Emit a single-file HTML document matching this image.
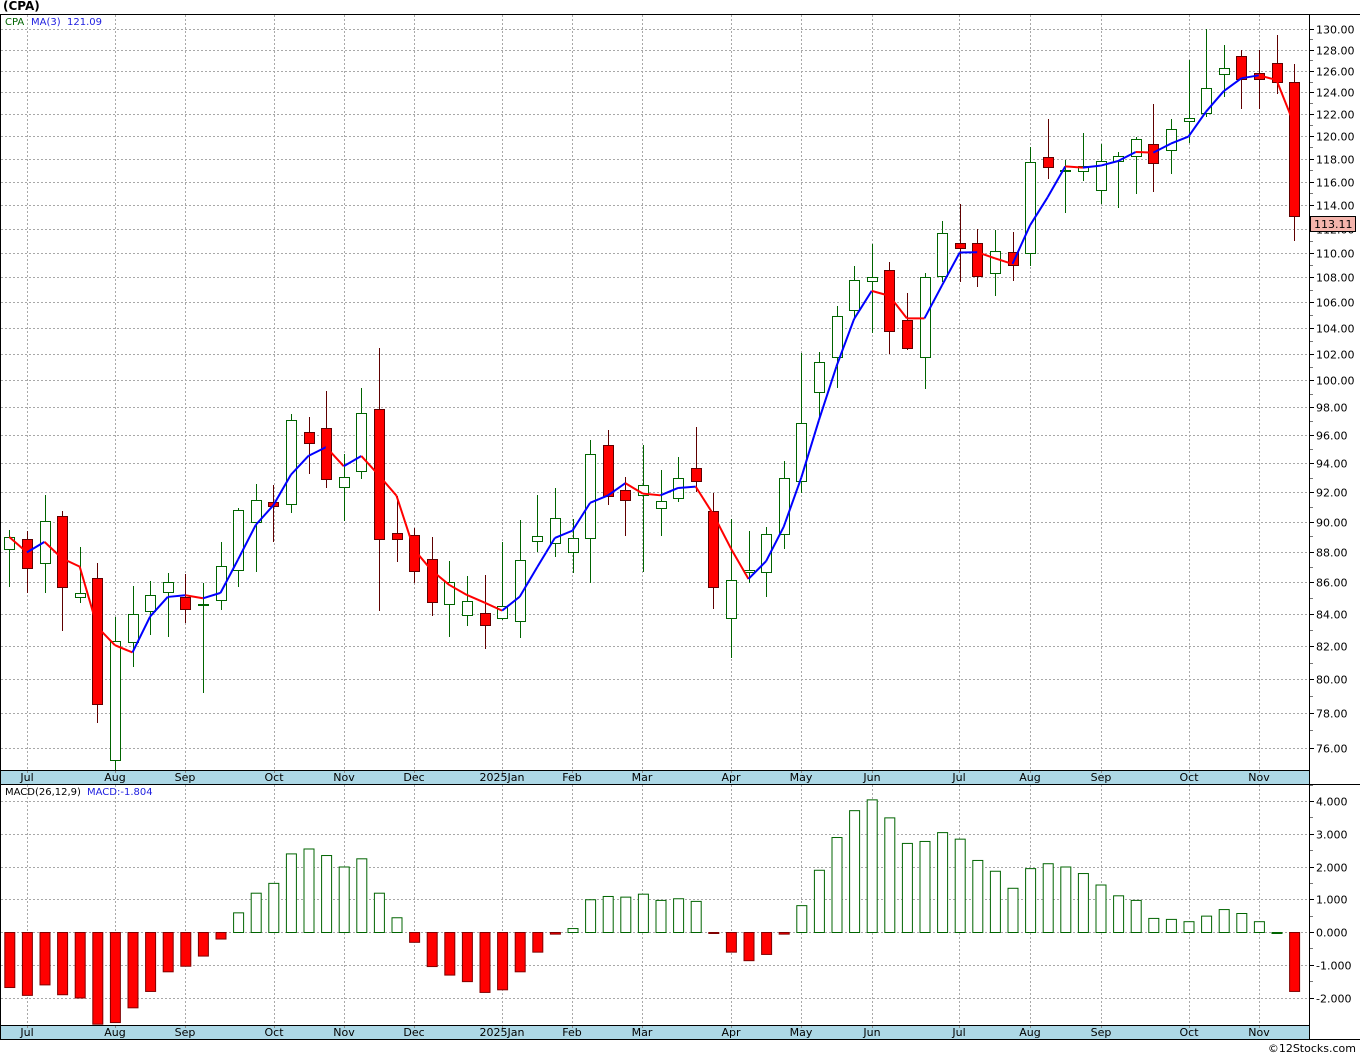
<!DOCTYPE html>
<html><head><meta charset="utf-8"><style>
html,body{margin:0;padding:0;background:#fff;width:1360px;height:1056px;overflow:hidden}
svg{display:block}
text{font-family:"DejaVu Sans","Liberation Sans",sans-serif;font-size:11px}
</style></head><body>
<svg id="s" width="1360" height="1056" xmlns="http://www.w3.org/2000/svg">
<text x="3" y="10" style="font-weight:bold;font-size:12px">(CPA)</text>
<g id="g"></g>
<text x="5" y="25" fill="#006400" style="font-size:10px">CPA</text>
<text x="31" y="25" fill="#2020e0" style="font-size:10px">MA(3)</text>
<text x="67" y="25" fill="#2020e0" style="font-size:10px">121.09</text>
<text x="5" y="795" fill="#000" style="font-size:10px">MACD(26,12,9)</text>
<text x="87" y="795" fill="#2020e0" style="font-size:10px">MACD:-1.804</text>
<text x="1356" y="1052" text-anchor="end" style="font-size:11px">©12Stocks.com</text>
</svg>
<script>
var C=[
[530,537,549,587,'g'],[531,539,568,593,'r'],[495,521,563,593,'g'],[511,516,587,631,'r'],[547,593,597,603,'g'],
[563,578,704,723,'r'],[617,641,760,770,'g'],[586,614,642,667,'g'],[581,595,611,635,'g'],[573,582,592,637,'g'],
[574,597,609,623,'r'],[583,604,605,693,'g'],[542,566,600,610,'g'],[508,510,570,587,'g'],[484,500,522,572,'g'],
[485,502,506,542,'r'],[414,420,504,513,'g'],[417,432,443,474,'r'],[391,428,479,488,'r'],[454,477,487,521,'g'],
[388,413,471,479,'g'],[348,409,539,611,'r'],[496,533,539,562,'r'],[528,535,571,583,'r'],[537,559,602,616,'r'],
[561,582,604,637,'g'],[576,601,615,626,'g'],[575,613,625,649,'r'],[542,606,618,620,'g'],[520,560,621,638,'g'],
[495,536,541,552,'g'],[488,518,543,557,'g'],[519,538,552,573,'g'],[440,454,538,583,'g'],[430,445,496,505,'r'],
[477,490,500,536,'r'],[445,485,495,572,'g'],[470,501,508,536,'g'],[457,478,498,502,'g'],[427,468,481,492,'r'],
[493,511,587,609,'r'],[519,580,618,658,'g'],[531,570,572,583,'g'],[527,534,572,597,'g'],[461,478,534,549,'g'],
[353,423,481,493,'g'],[352,362,392,420,'g'],[306,316,357,388,'g'],[266,280,310,320,'g'],[244,277,281,333,'g'],
[262,270,331,354,'r'],[293,320,348,350,'r'],[273,277,357,389,'g'],[221,233,276,282,'g'],[204,243,248,282,'r'],
[229,243,276,287,'r'],[230,251,273,296,'g'],[232,252,265,281,'r'],[147,162,253,266,'g'],[119,157,167,179,'r'],
[160,170,171,213,'g'],[133,166,171,181,'g'],[144,161,190,204,'g'],[152,156,161,208,'g'],[137,139,156,194,'g'],
[104,144,163,192,'r'],[119,129,150,174,'g'],[60,118,121,143,'g'],[29,88,113,117,'g'],[45,68,74,97,'g'],
[50,56,79,109,'r'],[50,73,79,109,'r'],[35,63,82,94,'r'],[64,82,216,241,'r']];
var M=[-1.68,-1.92,-1.6,-1.9,-2.0,-2.8,-2.75,-2.3,-1.8,-1.2,-1.03,-0.72,-0.2,0.6,1.2,1.5,2.4,2.55,2.35,2.0,2.25,1.2,0.45,-0.3,-1.04,-1.3,-1.5,-1.83,-1.75,-1.2,-0.6,-0.05,0.12,1.0,1.1,1.08,1.17,0.98,1.03,0.95,-0.03,-0.6,-0.86,-0.67,-0.05,0.82,1.9,2.9,3.72,4.05,3.5,2.72,2.78,3.05,2.85,2.2,1.87,1.35,1.95,2.1,2.0,1.8,1.45,1.12,0.98,0.43,0.4,0.33,0.5,0.7,0.58,0.33,0.0,-1.8];
var K=1339.4,L130=Math.log(130);
function py(p){return 29+(L130-Math.log(p))*K}
function pp(y){return Math.exp(L130-(y-29)/K)}
function X(i){return 9.3+17.6*i}
var h='';
var months=[['Jul',27],['Aug',115],['Sep',185],['Oct',274],['Nov',344],['Dec',414],['2025Jan',502],['Feb',572],['Mar',642],['Apr',731],['May',801],['Jun',872],['Jul',959],['Aug',1030],['Sep',1101],['Oct',1189],['Nov',1259]];
var dash='stroke="#a8a8a8" stroke-width="1" stroke-dasharray="2,2"';
// main panel grid
for(var p=76;p<=130;p+=2){var y=Math.round(py(p))+.5;h+='<line x1="1" x2="1309" y1="'+y+'" y2="'+y+'" '+dash+'/>';
h+='<line x1="1309" x2="1314" y1="'+y+'" y2="'+y+'" stroke="#000"/>';
h+='<text x="1316" y="'+(y+4)+'">'+p.toFixed(2)+'</text>';
var y2=Math.round(py(p+1))+.5;if(p<130)h+='<line x1="1309" x2="1313" y1="'+y2+'" y2="'+y2+'" stroke="#777"/>';}
for(var v=-2;v<=4;v++){var y=Math.round(932-v*32.75)+.5;h+='<line x1="1" x2="1309" y1="'+y+'" y2="'+y+'" '+dash+'/>';
h+='<line x1="1309" x2="1314" y1="'+y+'" y2="'+y+'" stroke="#000"/>';
h+='<text x="1316" y="'+(y+4)+'">'+(v<0?'-':'')+Math.abs(v).toFixed(3)+'</text>';
var y2=Math.round(932-(v+.5)*32.75)+.5;h+='<line x1="1309" x2="1313" y1="'+y2+'" y2="'+y2+'" stroke="#777"/>';}
months.forEach(function(m){var x=m[1]+.5;
h+='<line x1="'+x+'" x2="'+x+'" y1="15" y2="770" '+dash+'/>';
h+='<line x1="'+x+'" x2="'+x+'" y1="785" y2="1025" '+dash+'/>';});
// axis strips
h+='<rect x="0" y="770" width="1309" height="14" fill="#add8e6"/>';
h+='<rect x="0" y="1025" width="1309" height="14" fill="#add8e6"/>';
months.forEach(function(m){var x=m[1];
h+='<line x1="'+(x+.5)+'" x2="'+(x+.5)+'" y1="770" y2="773" stroke="#888"/>';
h+='<line x1="'+(x+.5)+'" x2="'+(x+.5)+'" y1="1025" y2="1028" stroke="#888"/>';
h+='<text x="'+x+'" y="781" text-anchor="middle">'+m[0]+'</text>';
h+='<text x="'+x+'" y="1036" text-anchor="middle">'+m[0]+'</text>';});
// borders
h+='<line x1="0" x2="1360" y1="14.5" y2="14.5" stroke="#000"/>';
h+='<line x1="0" x2="1309" y1="770.5" y2="770.5" stroke="#000"/>';
h+='<line x1="0" x2="1360" y1="784.5" y2="784.5" stroke="#000"/>';
h+='<line x1="0" x2="1309" y1="1025.5" y2="1025.5" stroke="#000"/>';
h+='<line x1="0" x2="1360" y1="1039.5" y2="1039.5" stroke="#000"/>';
h+='<line x1="1309.5" x2="1309.5" y1="14" y2="1040" stroke="#000"/>';
h+='<line x1="0.5" x2="0.5" y1="14" y2="1040" stroke="#000"/>';
// macd bars
M.forEach(function(v,i){var x=X(i)-5,y0=932;var y1=932-v*32.75;if(y1>1024)y1=1024;
var t=Math.min(y0,y1),hh=Math.max(Math.abs(y1-y0),1);
if(v<0)h+='<rect x="'+(x+.5)+'" y="'+(t+.5)+'" width="10" height="'+hh+'" fill="#f00" stroke="#800000"/>';
else h+='<rect x="'+(x+.5)+'" y="'+(t+.5)+'" width="10" height="'+hh+'" fill="#fff" stroke="#006400"/>';});
// candles
C.forEach(function(c,i){var x=Math.round(X(i)),red=c[4]=='r';var col=red?'#600000':'#006400';
h+='<line x1="'+(x+.5)+'" x2="'+(x+.5)+'" y1="'+c[0]+'" y2="'+c[3]+'" stroke="'+col+'"/>';
var bh=Math.max(c[2]-c[1],1);
h+='<rect x="'+(x-4.5)+'" y="'+(c[1]+.5)+'" width="10" height="'+bh+'" fill="'+(red?'#f00':'#fff')+'" stroke="'+col+'"/>';});
// MA3
var cl=C.map(function(c){return pp(c[4]=='r'?c[2]:c[1])});
var ma=cl.map(function(v,i){var a=cl.slice(Math.max(0,i-2),i+1);return a.reduce(function(s,t){return s+t},0)/a.length});
for(var i=1;i<ma.length;i++){var col=ma[i]>=ma[i-1]?'#0000ff':'#ff0000';
h+='<line x1="'+X(i-1)+'" y1="'+py(ma[i-1])+'" x2="'+X(i)+'" y2="'+py(ma[i])+'" stroke="'+col+'" stroke-width="2"/>';}
// last price box
h+='<rect x="1310.5" y="216.5" width="45" height="15" fill="#f4b4ac" stroke="#000"/>';
h+='<text x="1314" y="228">113.11</text>';
document.getElementById('g').innerHTML=h;
</script>
</body></html>
